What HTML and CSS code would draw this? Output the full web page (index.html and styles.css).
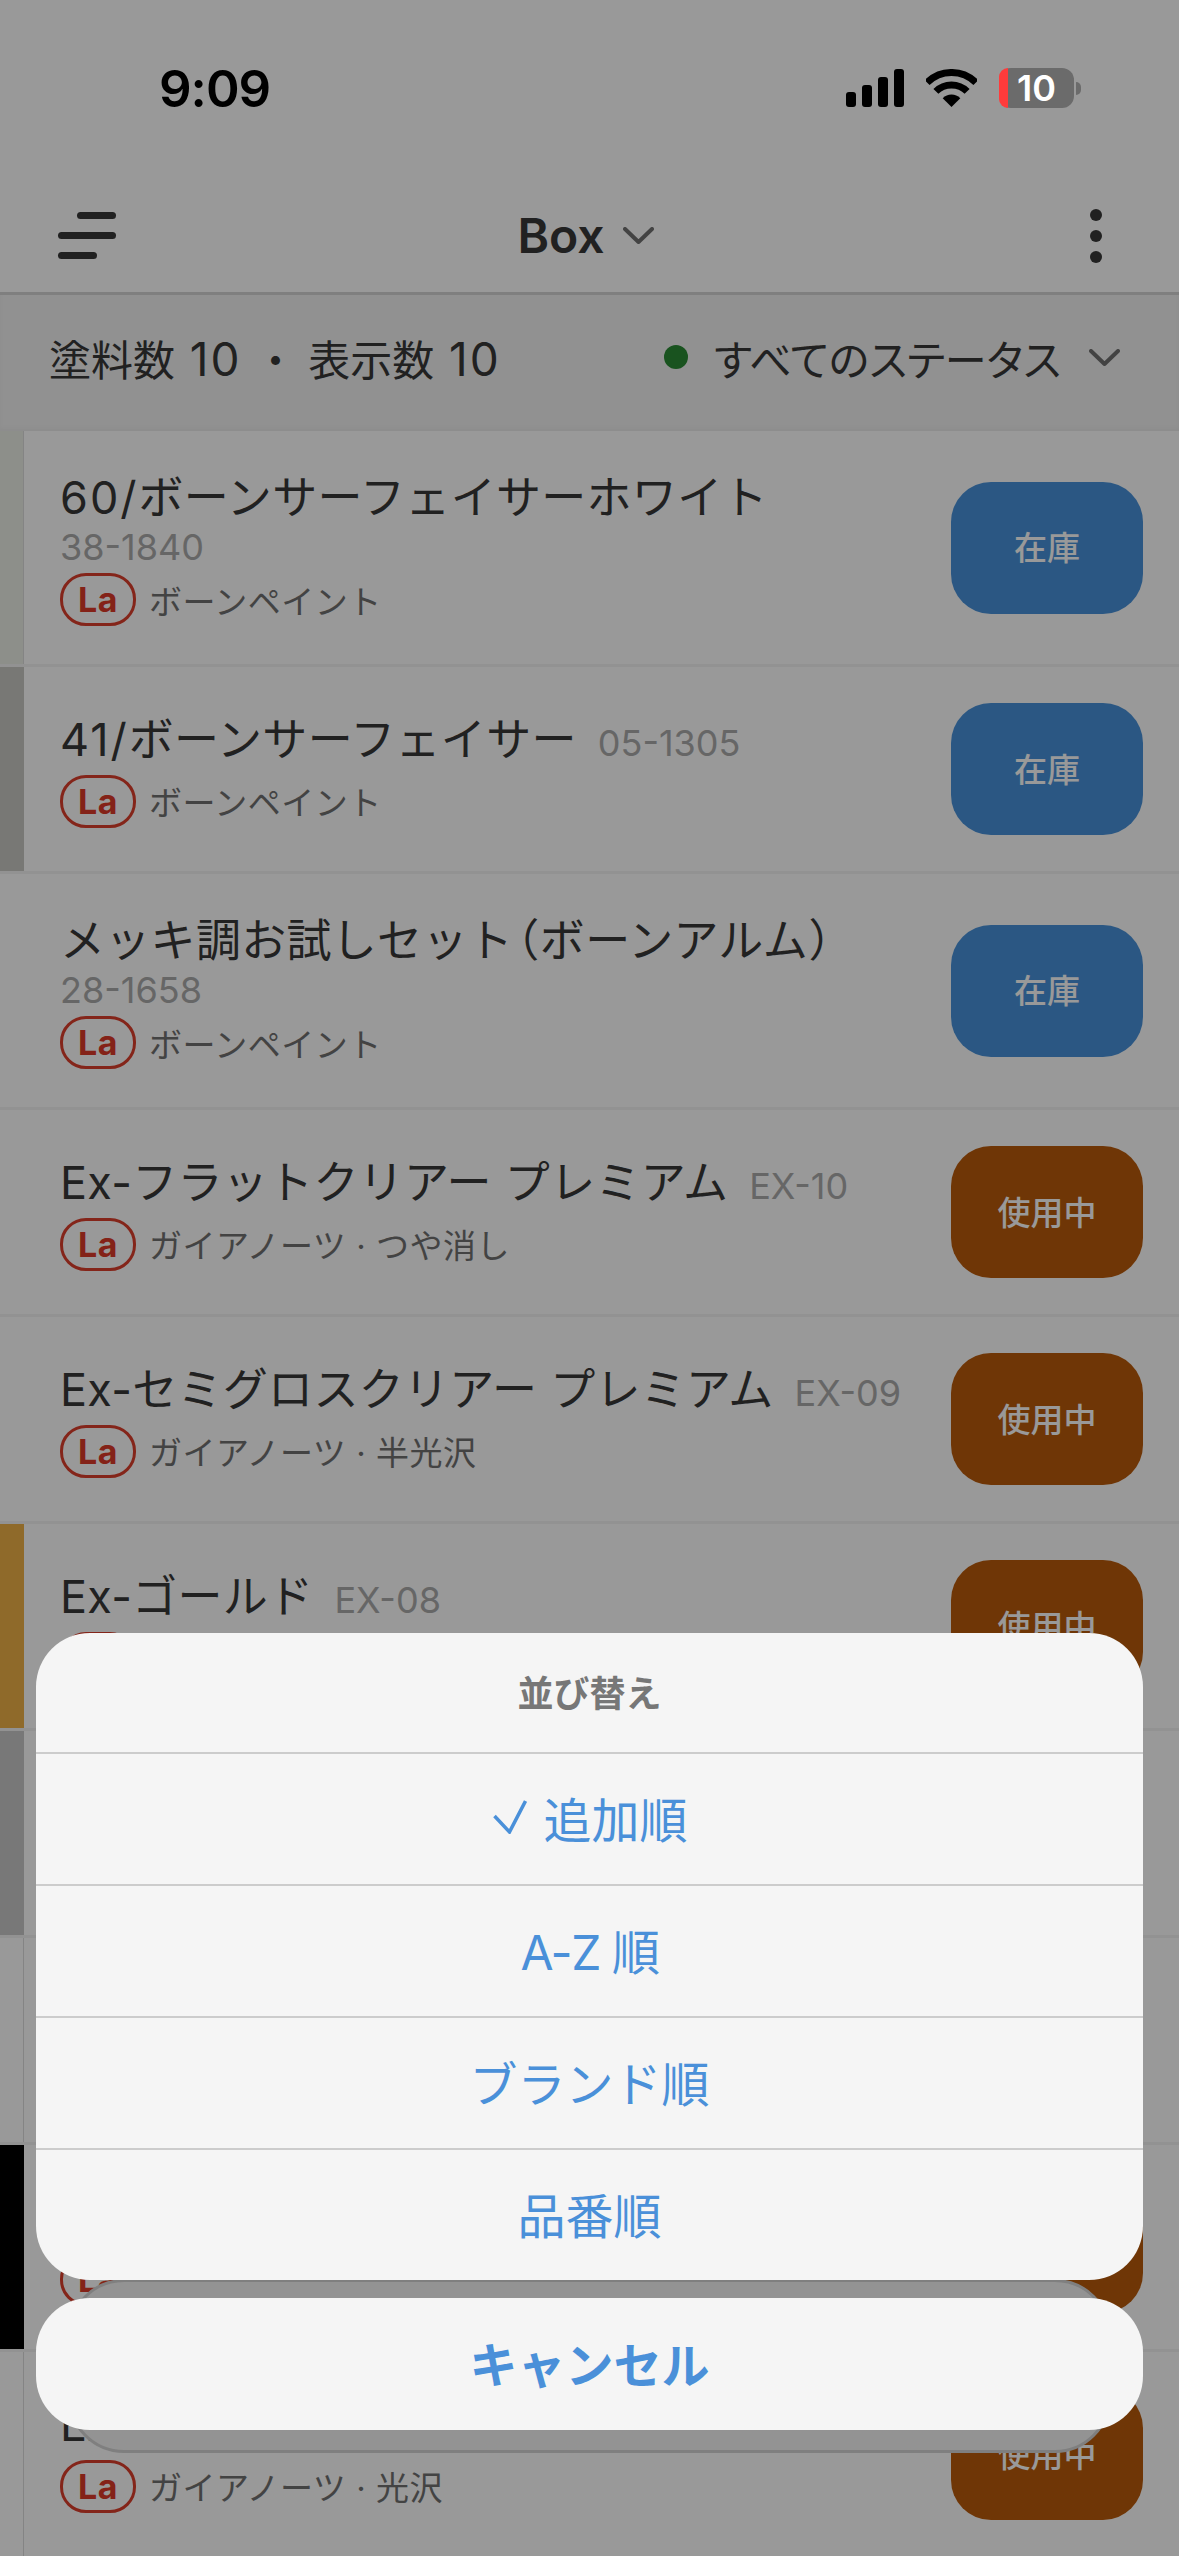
FILE: index.html
```html
<!DOCTYPE html>
<html lang="ja">
<head>
    <meta charset="UTF-8">
    <meta name="viewport" content="width=device-width, initial-scale=1.0">
    <title>Box</title>
    <link rel="stylesheet" href="styles.css">
</head>
<body>
    <div class="status-bar">
        <span class="clock">9:09</span>
        <div class="status-icons">
            <svg class="signal" width="58" height="38" viewBox="0 0 58 38">
                <rect x="0" y="23" width="10" height="15" rx="3"/>
                <rect x="16" y="16" width="10" height="22" rx="3"/>
                <rect x="32" y="8" width="10" height="30" rx="3"/>
                <rect x="48" y="0" width="10" height="38" rx="3"/>
            </svg>
            <svg class="wifi" width="51" height="38" viewBox="0 0 51 38">
                <path d="M1.1 13.6A34.5 34.5 0 0 1 49.9 13.6" fill="none" stroke="#000" stroke-width="7"/>
                <path d="M9.9 22.4A22 22 0 0 1 41.1 22.4" fill="none" stroke="#000" stroke-width="7"/>
                <path d="M25.5 38L16.7 29.2A12.5 12.5 0 0 1 34.3 29.2Z"/>
            </svg>
            <div class="battery"><span class="battery-low"></span><span class="battery-num">10</span></div>
            <span class="battery-nub"></span>
        </div>
    </div>

    <header class="nav">
        <div class="menu-icon"><span class="bar-a"></span><span class="bar-b"></span><span class="bar-c"></span></div>
        <div class="nav-title">
            <span>Box</span>
            <svg width="31" height="17" viewBox="0 0 31 17"><path d="M2 2L15.5 15L29 2" fill="none" stroke="#717171" stroke-width="4" stroke-linecap="round" stroke-linejoin="round"/></svg>
        </div>
        <div class="more-icon"><span></span><span></span><span></span></div>
    </header>

    <div class="filter-bar">
        <span class="counts">塗料数 <span class="cnt">10</span> ・ 表示数 <span class="cnt">10</span></span>
        <div class="status-filter">
            <span class="green-dot"></span>
            <span class="status-filter-text">すべてのステータス</span>
            <svg width="31" height="17" viewBox="0 0 31 17"><path d="M2 2L15.5 15L29 2" fill="none" stroke="#717171" stroke-width="4" stroke-linecap="round" stroke-linejoin="round"/></svg>
        </div>
    </div>

    <main class="paint-list">
        <div class="row">
            <div class="swatch swatch-bone edged"></div>
            <div class="row-body">
                <div class="info">
                    <div class="title"><span class="num">60/</span>ボーンサーフェイサーホワイト</div>
                    <div class="code-line">38-1840</div>
                    <div class="meta"><span class="badge">La</span><span class="brand">ボーンペイント</span></div>
                </div>
                <div class="state in-stock">在庫</div>
            </div>
        </div>
        <div class="row">
            <div class="swatch swatch-grey"></div>
            <div class="row-body">
                <div class="info">
                    <div class="title"><span class="num">41/</span>ボーンサーフェイサー<span class="code">05-1305</span></div>
                    <div class="meta"><span class="badge">La</span><span class="brand">ボーンペイント</span></div>
                </div>
                <div class="state in-stock">在庫</div>
            </div>
        </div>
        <div class="row">
            <div class="swatch"></div>
            <div class="row-body">
                <div class="info">
                    <div class="title">メッキ調お試しセット<span class="paren">（</span>ボーンアルム<span class="paren">）</span></div>
                    <div class="code-line">28-1658</div>
                    <div class="meta"><span class="badge">La</span><span class="brand">ボーンペイント</span></div>
                </div>
                <div class="state in-stock">在庫</div>
            </div>
        </div>
        <div class="row">
            <div class="swatch"></div>
            <div class="row-body">
                <div class="info">
                    <div class="title">Ex-フラットクリアー プレミアム<span class="code">EX-10</span></div>
                    <div class="meta"><span class="badge">La</span><span class="brand">ガイアノーツ · つや消し</span></div>
                </div>
                <div class="state in-use">使用中</div>
            </div>
        </div>
        <div class="row">
            <div class="swatch"></div>
            <div class="row-body">
                <div class="info">
                    <div class="title">Ex-セミグロスクリアー プレミアム<span class="code">EX-09</span></div>
                    <div class="meta"><span class="badge">La</span><span class="brand">ガイアノーツ · 半光沢</span></div>
                </div>
                <div class="state in-use">使用中</div>
            </div>
        </div>
        <div class="row">
            <div class="swatch swatch-gold"></div>
            <div class="row-body">
                <div class="info">
                    <div class="title">Ex-ゴールド<span class="code">EX-08</span></div>
                    <div class="meta"><span class="badge">La</span><span class="brand">ガイアノーツ · 光沢</span></div>
                </div>
                <div class="state in-use">使用中</div>
            </div>
        </div>
        <div class="row">
            <div class="swatch swatch-silver"></div>
            <div class="row-body">
                <div class="info">
                    <div class="title">Ex-シルバー<span class="code">EX-07</span></div>
                    <div class="meta"><span class="badge">La</span><span class="brand">ガイアノーツ · 光沢</span></div>
                </div>
                <div class="state in-use">使用中</div>
            </div>
        </div>
        <div class="row">
            <div class="swatch edged"></div>
            <div class="row-body">
                <div class="info">
                    <div class="title">Ex-ホワイト<span class="code">EX-01</span></div>
                    <div class="meta"><span class="badge">La</span><span class="brand">ガイアノーツ · 光沢</span></div>
                </div>
                <div class="state in-use">使用中</div>
            </div>
        </div>
        <div class="row">
            <div class="swatch swatch-black"></div>
            <div class="row-body">
                <div class="info">
                    <div class="title">Ex-ブラック<span class="code">EX-02</span></div>
                    <div class="meta"><span class="badge">La</span><span class="brand">ガイアノーツ · 光沢</span></div>
                </div>
                <div class="state in-use">使用中</div>
            </div>
        </div>
        <div class="row">
            <div class="swatch edged"></div>
            <div class="row-body">
                <div class="info">
                    <div class="title">Ex-クリアー<span class="code">EX-03</span></div>
                    <div class="meta"><span class="badge">La</span><span class="brand">ガイアノーツ · 光沢</span></div>
                </div>
                <div class="state in-use">使用中</div>
            </div>
        </div>
    </main>

    <div class="dim"></div>

    <div class="sheet-layer">
        <div class="sheet-ghost"></div>
        <div class="sheet">
            <div class="sheet-title">並び替え</div>
            <div class="sheet-item">
                <svg class="check" width="34" height="34" viewBox="0 0 34 34"><path d="M1.5 16L16.5 32L32.5 1" fill="none" stroke="#4a90d9" stroke-width="3.5"/></svg>
                <span>追加順</span>
            </div>
            <div class="sheet-item az">A-Z 順</div>
            <div class="sheet-item">ブランド順</div>
            <div class="sheet-item">品番順</div>
        </div>
        <div class="sheet-cancel">キャンセル</div>
    </div>
</body>
</html>
```

FILE: styles.css
```css
* { box-sizing: border-box; }
html, body { margin: 0; padding: 0; }
body { position: relative; width: 1179px; height: 2556px; overflow: hidden; background: #fff; color: #383838; font-family: Inter, "Noto Sans CJK JP", sans-serif; }

/* status bar sits above the dim layer */
.status-bar { position: relative; z-index: 3; height: 176px; display: flex; align-items: center; justify-content: space-between; padding: 0 98px 0 159px; }
.clock { font-size: 51px; font-weight: 600; color: #000; letter-spacing: -1px; }
.status-icons { display: flex; align-items: center; }
.signal { margin-right: 22px; }
.wifi { margin-right: 22px; }
.battery { position: relative; width: 75px; height: 40px; border-radius: 12px; background: #6b6b6b; display: flex; align-items: center; justify-content: center; }
.battery-low { position: absolute; left: 0; top: 0; bottom: 0; width: 9px; background: #ff3b3b; border-radius: 12px 0 0 12px; }
.battery-num { position: relative; color: #fff; font-size: 36px; line-height: 36px; font-weight: 600; }
.battery-nub { width: 5px; height: 13px; margin-left: 2px; background: #6b6b6b; border-radius: 0 6px 6px 0; }

.nav { height: 119px; padding: 3px 58px 0 58px; display: grid; grid-template-columns: 1fr auto 1fr; align-items: center; border-bottom: 3px solid #d4d4d4; }
.menu-icon { width: 58px; display: flex; flex-direction: column; gap: 13px; }
.menu-icon span { display: block; height: 7px; border-radius: 4px; background: #383838; }
.bar-a { width: 39px; align-self: flex-end; }
.bar-b { width: 58px; }
.bar-c { width: 39px; }
.nav-title { display: flex; align-items: center; gap: 18px; margin-right: 8px; font-size: 48px; font-weight: 600; }
.more-icon { display: flex; flex-direction: column; gap: 9px; justify-self: end; margin-right: 19px; }
.more-icon span { display: block; width: 12px; height: 12px; border-radius: 50%; background: #383838; }

.filter-bar { height: 136px; padding: 0 59px 12px 49px; display: flex; align-items: center; justify-content: space-between; background: #f2f2f2; font-size: 42px; box-shadow: inset 0 -3px 4px rgba(0,0,0,0.03); }
.cnt { margin: 0 1px 0 3px; font-size: 46px; letter-spacing: 2px; }
.status-filter { display: flex; align-items: center; }
.green-dot { width: 24px; height: 24px; border-radius: 50%; background: #2a8a34; margin-right: 26px; }
.status-filter-text { font-feature-settings: "palt"; margin-right: 28px; }

.row { display: flex; min-height: 207px; border-bottom: 3px solid #f3f3f3; }
.swatch { width: 24px; flex-shrink: 0; }
.edged { border-right: 1px solid #dcdcdc; }
.swatch-bone { background: #ebefe6; }
.swatch-grey { background: #c9c9c3; }
.swatch-gold { background: #eeb146; }
.swatch-silver { background: #c8c8c8; }
.swatch-black { background: #000; }
.row-body { flex: 1; display: flex; align-items: center; justify-content: space-between; padding: 0 36px; }
.info { padding: 38px 0; }
.title { font-size: 45px; line-height: 58px; letter-spacing: 0.3px; white-space: nowrap; }
.num { letter-spacing: 2px; }
.paren { font-feature-settings: "palt"; margin: 0 2px; }
.code { margin-left: 21px; font-size: 36px; letter-spacing: 0; color: #aaa; }
.code-line { font-size: 36px; line-height: 40px; color: #aaa; }
.meta { display: flex; align-items: center; margin-top: 6px; }
.title + .meta { margin-top: 3px; }
.badge { width: 76px; height: 53px; border: 3px solid #dc3f2c; border-radius: 26px; display: flex; align-items: center; justify-content: center; font-size: 34px; font-weight: 700; letter-spacing: 0.5px; color: #dc3a28; }
.brand { margin-left: 13px; font-size: 33px; letter-spacing: 0.5px; color: #717171; }
.state { width: 192px; height: 132px; flex-shrink: 0; padding-bottom: 3px; border-radius: 40px; display: flex; align-items: center; justify-content: center; font-size: 33px; font-weight: 500; color: #fff; }
.in-stock { background: #4992da; }
.in-use { background: #b95a0b; }

/* dim layer and action sheet */
.dim { position: absolute; inset: 0; z-index: 1; background: rgba(0,0,0,0.4); }
.sheet-layer { position: absolute; left: 0; right: 0; bottom: 0; z-index: 2; padding: 0 36px 126px; display: flex; flex-direction: column; gap: 18px; }
.sheet-ghost { position: absolute; left: 68px; right: 68px; bottom: 103px; height: 174px; background: #939393; border: 3px solid #7f7f7f; border-radius: 56px; }
.sheet, .sheet-cancel { position: relative; background: #f5f5f5; border-radius: 54px; color: #4a90d9; font-size: 48px; text-align: center; }
.sheet { overflow: hidden; }
.sheet-title { height: 119px; padding-bottom: 4px; display: flex; align-items: center; justify-content: center; font-size: 36px; font-weight: 700; color: #777; }
.sheet-item { height: 132px; padding-bottom: 5px; display: flex; align-items: center; justify-content: center; gap: 16px; border-top: 2px solid #ccc; }
.check { margin-left: 2px; }
.az { letter-spacing: -1.5px; }
.sheet-cancel { height: 132px; padding-bottom: 5px; display: flex; align-items: center; justify-content: center; font-weight: 700; }
```
